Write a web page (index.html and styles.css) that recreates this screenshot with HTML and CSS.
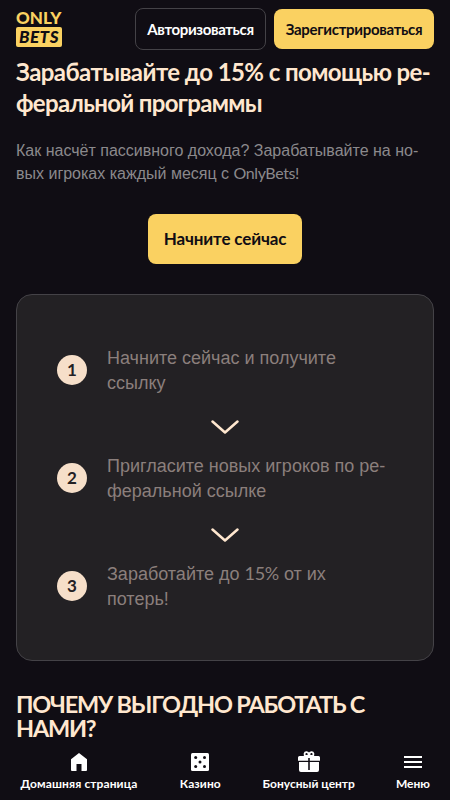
FILE: index.html
```html
<!DOCTYPE html>
<html lang="ru">
<head>
<meta charset="utf-8">
<meta name="viewport" content="width=device-width, initial-scale=1">
<title>OnlyBets</title>
<link rel="stylesheet" href="styles.css">
</head>
<body>
<header class="header">
  <a class="logo"><span class="logo-only">ONLY</span><span class="logo-bets">BETS</span></a>
  <div class="auth">
    <button class="btn login"><span>Авторизоваться</span></button>
    <button class="btn register"><span>Зарегистрироваться</span></button>
  </div>
</header>
<main class="main">
  <h1 class="title"><span class="title-a">Зарабатывайте до 15% с помощью ре-</span><br><span class="title-b">феральной программы</span></h1>
  <p class="lead">Как насчёт пассивного дохода? Зарабатывайте на но-<br>вых игроках каждый месяц с <span class="brand">OnlyBets!</span></p>
  <button class="btn start"><span>Начните сейчас</span></button>
  <section class="steps">
    <div class="step"><span class="num">1</span><p>Начните сейчас и получите<br>ссылку</p></div>
    <svg class="arrow" viewBox="0 0 28 14"><path d="M1.500 1.500 14 12.500 26.500 1.500"/></svg>
    <div class="step"><span class="num">2</span><p>Пригласите новых игроков по ре-<br>феральной ссылке</p></div>
    <svg class="arrow" viewBox="0 0 28 14"><path d="M1.500 1.500 14 12.500 26.500 1.500"/></svg>
    <div class="step"><span class="num">3</span><p>Заработайте до <span class="percent">15%</span> от их<br>потерь!</p></div>
  </section>
  <h2 class="why">ПОЧЕМУ ВЫГОДНО РАБОТАТЬ С<br>НАМИ?</h2>
</main>
<nav class="nav">
  <a class="item home"><svg viewBox="0 0 24 24"><path d="M12 3 4 9.200V20q0 1 1 1h4.500v-7h5v7H19q1 0 1-1V9.200Z"/></svg><span>Домашняя страница</span></a>
  <a class="item casino"><svg viewBox="0 0 24 24"><rect x="3" y="3" width="18" height="18" rx="1.500"/><g class="dark"><circle cx="7.700" cy="7.500" r="1.500"/><circle cx="16.500" cy="7.500" r="1.500"/><circle cx="12" cy="12" r="1.500"/><circle cx="7.700" cy="16.500" r="1.500"/><circle cx="16.500" cy="16.500" r="1.500"/></g></svg><span>Казино</span></a>
  <a class="item bonus"><svg viewBox="0 0 24 24"><path d="M2.500 6h19q1.500 0 1.500 1.500v3.300H12.800V8h-1.600v2.800H1V7.500Q1 6 2.500 6ZM2 12.100h9.200V20h1.600v-7.900H22v8q0 1.900-1.900 1.900H3.900Q2 22 2 20.100Z"/><path class="bow" d="M11.500 6H8.800a2 2 0 1 1 2.700-2ZM12.500 6h2.700a2 2 0 1 0-2.700-2Z"/></svg><span>Бонусный центр</span></a>
  <a class="item menu"><svg viewBox="0 0 24 24"><path d="M3 6h18v2H3zm0 5h18v2H3zm0 5h18v2H3z"/></svg><span>Меню</span></a>
</nav>
</body>
</html>
```
FILE: styles.css
```css
* { box-sizing: border-box; }
body { margin: 0; height: 800px; overflow: hidden; display: flex; flex-direction: column; background: #100d14; color: #fff; font-family: Lato, "Noto Sans", sans-serif; }
h1, h2, p { margin: 0; font-weight: inherit; }
span { white-space: nowrap; }
.header { height: 57px; flex: none; display: flex; justify-content: space-between; align-items: flex-start; padding: 8px 16px 0; }
.logo { width: 46px; padding-top: 2px; display: flex; flex-direction: column; color: #fad161; font-size: 17px; font-weight: 900; }
.logo-only { height: 15px; line-height: 16px; font-family: Lato, sans-serif; }
.logo-bets { height: 20px; line-height: 20px; margin-top: 2px; background: #fad161; color: #100d14; border-radius: 2px; font-style: italic; text-align: center; letter-spacing: .5px; }
.auth { display: flex; gap: 8px; align-items: center; }
.btn { border: 0; border-radius: 8px; padding: 0 0 1px; background: #fad161; color: #100d14; font: 700 15px Lato, "Noto Sans", sans-serif; }
.login { width: 131px; height: 42px; background: #100d14; border: 1px solid #444247; color: #fff; letter-spacing: -.36px; }
.register { width: 160px; height: 40px; letter-spacing: -.3px; }
.main { flex: 1; padding: 0 16px; overflow: hidden; }
.title { color: #ffe7cf; font-size: 24px; font-weight: 700; line-height: 31px; height: 62px; margin-top: -1px; }
.title-a { letter-spacing: -.58px; }
.title-b { letter-spacing: -.67px; }
.lead { margin-top: 22px; color: #8b898c; font: 16px/22px "Liberation Sans", sans-serif; }
.brand { font-family: Lato, sans-serif; letter-spacing: -.4px; }
.start { display: block; width: 154px; height: 50px; margin: 29px auto 30px; padding-bottom: 2px; font-size: 17px; letter-spacing: -.15px; }
.steps { height: 367px; border: 1px solid #444247; border-radius: 16px; background: #232124; padding: 50px 40px; display: flex; flex-direction: column; align-items: center; }
.step { width: 100%; height: 50px; display: flex; align-items: center; gap: 20px; color: #8b7f7c; font: 18px/25px "Liberation Sans", sans-serif; }
.num { flex: none; width: 30px; height: 30px; line-height: 29px; border-radius: 50%; background: #f6dfc9; color: #232124; font-family: Lato, sans-serif; font-size: 17px; font-weight: 700; text-align: center; }
.step p { padding-top: 1px; }
.percent { font-family: Lato, sans-serif; letter-spacing: -.3px; }
.arrow { width: 28px; height: 14px; margin: 25px 0 19px; flex: none; fill: none; stroke: #ffe7cf; stroke-width: 2.500; stroke-linecap: round; stroke-linejoin: round; }
.why { margin-top: 31px; color: #ffe7cf; font-size: 23.500px; font-weight: 700; line-height: 24px; letter-spacing: -1.200px; }
.nav { height: 58px; flex: none; display: flex; justify-content: space-between; padding: 8px 20px 0; background: #100d14; font-size: 12px; font-weight: 700; line-height: 16px; }
.item { display: flex; flex-direction: column; align-items: center; gap: 1.500px; }
.item svg { width: 24px; height: 24px; fill: #fff; }
.item .dark { fill: #100d14; }
.item .bow { fill: none; stroke: #fff; stroke-width: 1.800; }
.home { width: 118px; letter-spacing: .1px; }
.casino { width: 42px; letter-spacing: .1px; }
.bonus { width: 92px; }
.menu { width: 34px; }
```
